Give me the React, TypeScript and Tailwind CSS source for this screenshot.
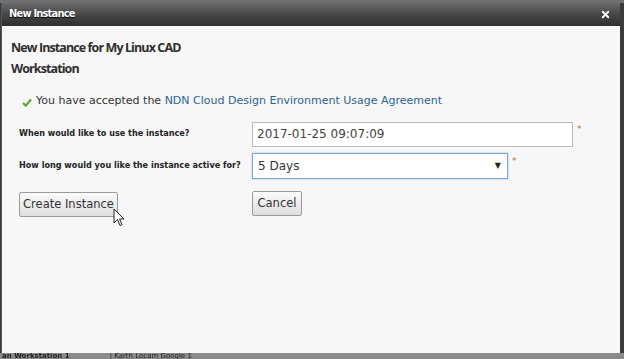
import { X } from "lucide-react";

const Cursor = () => (
  <svg width="12" height="19" viewBox="0 0 12 19" className="absolute left-[111px] top-[205px]">
    <path d="M1 1 L1 15 L4.5 11.5 L7 17.5 L9 16.6 L6.6 11 L11 11 Z" fill="#fff" stroke="#222" strokeWidth="1" strokeLinejoin="round" />
  </svg>
);

const App = () => {
  return (
    <div className="w-[624px] h-[359px] bg-[#3c3c3c] flex flex-col overflow-hidden font-['DejaVu_Sans',sans-serif]">
      {/* page strip behind dialog */}
      <div className="h-[3px] bg-[#707070] flex-shrink-0" />

      <div className="flex-1 flex flex-col ml-[1px] mr-[4px] border-l border-[#555] bg-[#f6f6f6] relative">
        {/* Title bar */}
        <div className="h-[23px] flex items-center justify-between px-[7px] bg-gradient-to-b from-[#6a6a6a] via-[#474747] to-[#2f2f2f] flex-shrink-0">
          <span className="text-white text-[11px] font-bold tracking-[-0.8px] font-['DejaVu_Sans_Condensed','DejaVu_Sans',sans-serif] [text-shadow:0_1px_1px_#000]">
            New Instance
          </span>
          <X className="w-[11px] h-[11px] text-white mr-[2px]" strokeWidth={4} />
        </div>

        {/* Body */}
        <div className="flex-1 flex flex-col px-[9px] pt-[11px] bg-[#f7f7f7]">
          <h1 className="text-[12.5px] leading-[21px] font-bold text-[#2e2e2e] w-[220px] tracking-[-0.9px] font-['Open_Sans',sans-serif]">
            New Instance for My Linux CAD Workstation
          </h1>

          <div className="flex items-center mt-[14px] ml-[11px] text-[11px] text-[#333]">
            <svg width="10" height="9" viewBox="0 0 10 9" className="mr-[4px] mt-[2px]">
              <path d="M1 5 L3.8 7.6 L9 1.4" fill="none" stroke="#5aa52e" strokeWidth="2.2" />
            </svg>
            <span>You have accepted the&nbsp;</span>
            <span className="text-[#2a6496]">NDN Cloud Design Environment Usage Agreement</span>
          </div>

          <div className="flex items-center mt-[12px] ml-[8px]">
            <label className="w-[233px] whitespace-nowrap text-[9px] font-bold text-[#222] font-['DejaVu_Sans_Condensed','DejaVu_Sans',sans-serif]">
              When would like to use the instance?
            </label>
            <div className="w-[321px] h-[25px] border border-[#bbb] bg-white flex items-center px-[4px] text-[12px] text-[#444]">
              2017-01-25 09:07:09
            </div>
            <span className="text-[#d9534f] text-[9px] ml-[4px] -mt-[8px]">*</span>
          </div>

          <div className="flex items-center mt-[6px] ml-[8px]">
            <label className="w-[233px] whitespace-nowrap text-[9px] font-bold text-[#222] font-['DejaVu_Sans_Condensed','DejaVu_Sans',sans-serif]">
              How long would you like the instance active for?
            </label>
            <div className="w-[256px] h-[26px] border border-[#79a6d8] bg-white flex items-center justify-between pl-[5px] pr-[6px] text-[12px] text-[#333] shadow-[0_0_2px_#a9c8ec]">
              <span>5 Days</span>
              <span className="text-[8px] text-[#222]">▼</span>
            </div>
            <span className="text-[#d9534f] text-[9px] ml-[4px] -mt-[8px]">*</span>
          </div>

          <div className="flex items-center mt-[12px] ml-[8px]">
            <div className="w-[233px]">
              <button className="h-[25px] w-[99px] border border-[#9a9a9a] rounded-[2px] bg-gradient-to-b from-[#fbfbfb] to-[#dedede] text-[11.5px] text-[#333]">
                Create Instance
              </button>
            </div>
            <button className="h-[25px] w-[50px] border border-[#9a9a9a] rounded-[2px] bg-gradient-to-b from-[#fbfbfb] to-[#dedede] text-[11.5px] text-[#333]">
              Cancel
            </button>
          </div>
        </div>

        <Cursor />
      </div>

      {/* page content peeking below */}
      <div className="h-[6px] flex-shrink-0 bg-[#8a8a8a] overflow-hidden flex items-start gap-[40px] pl-[2px]">
        <span className="text-[7px] leading-[6px] font-bold text-[#222] whitespace-nowrap blur-[0.4px]">an Workstation 1</span>
        <span className="text-[7px] leading-[6px] text-[#222] whitespace-nowrap blur-[0.4px]">| Karth Locam Google 1</span>
      </div>
    </div>
  );
};

export default App;
